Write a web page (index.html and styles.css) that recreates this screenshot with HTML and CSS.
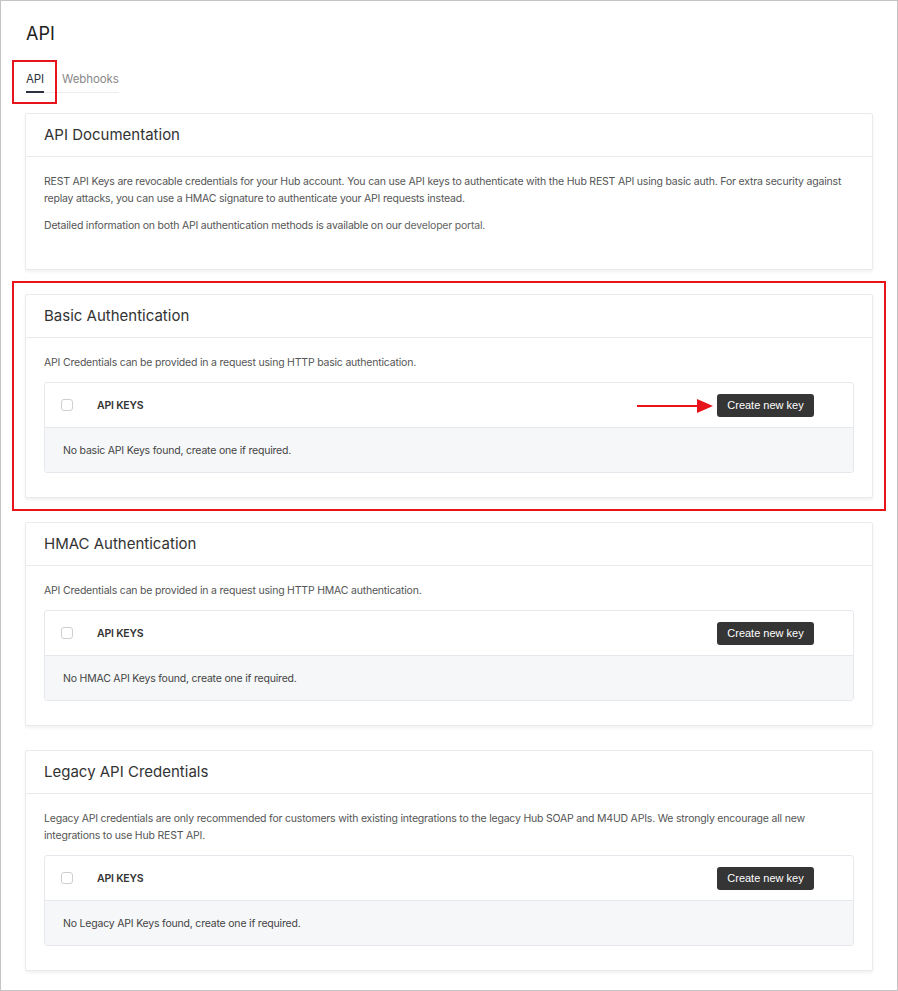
FILE: index.html
```html
<!DOCTYPE html>
<html lang="en">
<head>
  <meta charset="UTF-8" />
  <title>API</title>
  <link rel="stylesheet" href="styles.css">
</head>
<body>
  <div class="page">
    <h1>API</h1>

    <div class="tabs">
      <a class="tab active" href="#">API</a>
      <a class="tab" href="#">Webhooks</a>
    </div>

    <div class="cards">
      <div class="card">
        <div class="card-head">API Documentation</div>
        <div class="card-body">
          <p>REST API Keys are revocable credentials for your Hub account. You can use API keys to authenticate with the Hub REST API using basic auth. For extra security against replay attacks, you can use a HMAC signature to authenticate your API requests instead.</p>
          <p>Detailed information on both API authentication methods is available on our <a href="#">developer portal</a>.</p>
        </div>
      </div>

      <div class="highlight">
        <div class="card">
          <div class="card-head">Basic Authentication</div>
          <div class="card-body">
            <p>API Credentials can be provided in a request using HTTP basic authentication.</p>
            <div class="keys">
              <div class="keys-head">
                <span class="check"></span>
                <span class="keys-title">API KEYS</span>
                <button class="btn pointed">Create new key</button>
              </div>
              <div class="keys-empty">No basic API Keys found, create one if required.</div>
            </div>
          </div>
        </div>
      </div>

      <div class="card">
        <div class="card-head">HMAC Authentication</div>
        <div class="card-body">
          <p>API Credentials can be provided in a request using HTTP HMAC authentication.</p>
          <div class="keys">
            <div class="keys-head">
              <span class="check"></span>
              <span class="keys-title">API KEYS</span>
              <button class="btn">Create new key</button>
            </div>
            <div class="keys-empty">No HMAC API Keys found, create one if required.</div>
          </div>
        </div>
      </div>

      <div class="card">
        <div class="card-head">Legacy API Credentials</div>
        <div class="card-body">
          <p>Legacy API credentials are only recommended for customers with existing integrations to the legacy Hub SOAP and M4UD APIs. We strongly encourage all new integrations to use Hub REST API.</p>
          <div class="keys">
            <div class="keys-head">
              <span class="check"></span>
              <span class="keys-title">API KEYS</span>
              <button class="btn">Create new key</button>
            </div>
            <div class="keys-empty">No Legacy API Keys found, create one if required.</div>
          </div>
        </div>
      </div>
    </div>
  </div>
</body>
</html>
```

FILE: styles.css
```css
* {
  box-sizing: border-box;
}

html, body {
  margin: 0;
  background-color: white;
}

body {
  font-family: 'Inter', 'Noto Sans', sans-serif;
  color: #555;
}

.page {
  width: 898px;
  height: 991px;
  border: 1px solid #c4c4c4;
  padding: 20px 24px 0 24px;
}

h1 {
  margin: 0 0 0 1px;
  font-size: 18px;
  font-weight: 400;
  line-height: 26px;
  color: #222;
}

.tabs {
  display: flex;
  gap: 18px;
  margin: 24px 0 0 1px;
  width: 93px;
  border-bottom: 1px solid #ececec;
}

.tab {
  position: relative;
  font-size: 11.5px;
  letter-spacing: -0.1px;
  color: #888;
  text-decoration: none;
  line-height: 16px;
  padding-bottom: 4px;
}

.tab.active {
  color: #2d3140;
  border-bottom: 2px solid #2d3140;
  margin-bottom: -1px;
}

/* red annotation round the active tab */
.tab.active::after {
  content: '';
  position: absolute;
  left: -14px;
  right: -13px;
  top: -11px;
  bottom: -13px;
  border: 2px solid #e8141c;
}

.cards {
  display: flex;
  flex-direction: column;
  gap: 24px;
  margin-top: 20px;
}

.card {
  background-color: white;
  border: 1px solid #ebebeb;
  border-radius: 2px;
  box-shadow: 0 2px 3px rgba(0, 0, 0, 0.06);
}

.highlight {
  margin: -13px;
  padding: 11px;
  border: 2px solid #e8141c;
}

.card-head {
  padding: 12px 18px;
  font-size: 15px;
  line-height: 18px;
  color: #333;
  border-bottom: 1px solid #ebebeb;
}

.card-body {
  padding: 16px 18px 24px;
}

.card-body p {
  margin: 0 0 10px;
  font-size: 10.5px;
  letter-spacing: -0.2px;
  line-height: 17px;
  color: #555;
}

.card-body p:last-of-type {
  margin-bottom: 11px;
}

.card-body a {
  color: #666;
  text-decoration: none;
}

.keys {
  border: 1px solid #e6e8ee;
  border-radius: 3px;
}

.keys-head {
  display: flex;
  align-items: center;
  height: 44px;
  padding: 0 39px 0 16px;
}

.check {
  width: 12px;
  height: 12px;
  border: 1px solid #cfcfcf;
  border-radius: 3px;
  margin-right: 24px;
}

.keys-title {
  font-size: 10.5px;
  letter-spacing: -0.2px;
  font-weight: 600;
  color: #333;
}

.btn {
  position: relative;
  margin-left: auto;
  width: 97px;
  height: 23px;
  border: none;
  border-radius: 3px;
  background-color: #353535;
  color: white;
  font-family: 'Liberation Sans', Arial, sans-serif;
  font-size: 11px;
  cursor: pointer;
}

/* red arrow pointing at the first button */
.btn.pointed::before {
  content: '';
  position: absolute;
  right: calc(100% + 20px);
  top: 11px;
  width: 60px;
  height: 2px;
  background-color: #e8141c;
}

.btn.pointed::after {
  content: '';
  position: absolute;
  right: calc(100% + 4px);
  top: 5px;
  border-left: 16px solid #e8141c;
  border-top: 7px solid transparent;
  border-bottom: 7px solid transparent;
}

.keys-empty {
  height: 45px;
  display: flex;
  align-items: center;
  padding: 0 18px;
  background-color: #f6f7f9;
  border-top: 1px solid #e6e8ee;
  font-size: 10.5px;
  letter-spacing: -0.2px;
  color: #444;
}
```
